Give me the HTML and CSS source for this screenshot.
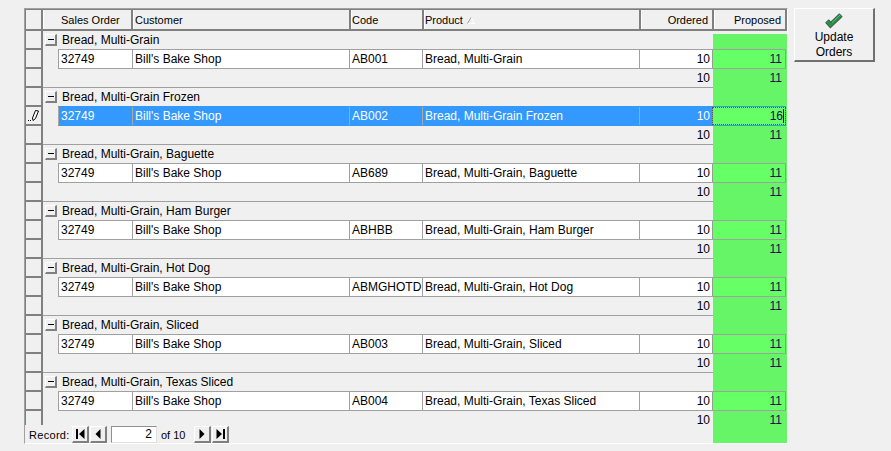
FILE: index.html
```html
<!DOCTYPE html>
<html lang="en">
<head>
<meta charset="utf-8">
<title>Update Orders</title>
<link rel="stylesheet" href="styles.css">
</head>
<body>
<div class="page">
  <div class="sheet">
    <div class="head">
      <div class="sel-head"></div>
      <div class="hc h-so">Sales Order</div>
      <div class="hc h-cu">Customer</div>
      <div class="hc h-co">Code</div>
      <div class="hc h-pr">Product <svg class="sort" width="8" height="7" viewBox="0 0 8 7"><path d="M4 .5 L7.500 6.500 H.5 Z" fill="none" stroke="#fff"/><path d="M4 .5 L.5 6.500" fill="none" stroke="#999"/></svg></div>
      <div class="hc h-or">Ordered</div>
      <div class="hc h-pp">Proposed</div>
    </div>
    <div class="body">
      <div class="group">
        <div class="sel-col"><i></i><i></i><i></i></div>
        <div class="rows">
          <div class="gh"><span class="tog"></span><span class="gt">Bread, Multi-Grain</span><span class="gf"></span></div>
          <div class="dr"><span class="d c-so">32749</span><span class="d c-cu">Bill's Bake Shop</span><span class="d c-co">AB001</span><span class="d c-pr">Bread, Multi-Grain</span><span class="d c-or">10</span><span class="d pv">11</span></div>
          <div class="ft"><span class="tot">10</span><span class="totg">11</span></div>
        </div>
      </div>
      <div class="group">
        <div class="sel-col"><i></i><i class="edit"><svg width="14" height="13" viewBox="0 0 14 13"><path d="M8.500 1.500 L11.500 2 L8.500 9.500 L6 11.500 L5.500 9 Z" fill="#fff" stroke="#000"/><path d="M1 11.500h1M3 11.500h1" stroke="#000"/></svg></i><i></i></div>
        <div class="rows">
          <div class="gh"><span class="tog"></span><span class="gt">Bread, Multi-Grain Frozen</span><span class="gf"></span></div>
          <div class="dr sel"><span class="d c-so">32749</span><span class="d c-cu">Bill's Bake Shop</span><span class="d c-co">AB002</span><span class="d c-pr">Bread, Multi-Grain Frozen</span><span class="d c-or">10</span><span class="d pv"><span class="cur">16</span></span></div>
          <div class="ft"><span class="tot">10</span><span class="totg">11</span></div>
        </div>
      </div>
      <div class="group">
        <div class="sel-col"><i></i><i></i><i></i></div>
        <div class="rows">
          <div class="gh"><span class="tog"></span><span class="gt">Bread, Multi-Grain, Baguette</span><span class="gf"></span></div>
          <div class="dr"><span class="d c-so">32749</span><span class="d c-cu">Bill's Bake Shop</span><span class="d c-co">AB689</span><span class="d c-pr">Bread, Multi-Grain, Baguette</span><span class="d c-or">10</span><span class="d pv">11</span></div>
          <div class="ft"><span class="tot">10</span><span class="totg">11</span></div>
        </div>
      </div>
      <div class="group">
        <div class="sel-col"><i></i><i></i><i></i></div>
        <div class="rows">
          <div class="gh"><span class="tog"></span><span class="gt">Bread, Multi-Grain, Ham Burger</span><span class="gf"></span></div>
          <div class="dr"><span class="d c-so">32749</span><span class="d c-cu">Bill's Bake Shop</span><span class="d c-co">ABHBB</span><span class="d c-pr">Bread, Multi-Grain, Ham Burger</span><span class="d c-or">10</span><span class="d pv">11</span></div>
          <div class="ft"><span class="tot">10</span><span class="totg">11</span></div>
        </div>
      </div>
      <div class="group">
        <div class="sel-col"><i></i><i></i><i></i></div>
        <div class="rows">
          <div class="gh"><span class="tog"></span><span class="gt">Bread, Multi-Grain, Hot Dog</span><span class="gf"></span></div>
          <div class="dr"><span class="d c-so">32749</span><span class="d c-cu">Bill's Bake Shop</span><span class="d c-co">ABMGHOTD</span><span class="d c-pr">Bread, Multi-Grain, Hot Dog</span><span class="d c-or">10</span><span class="d pv">11</span></div>
          <div class="ft"><span class="tot">10</span><span class="totg">11</span></div>
        </div>
      </div>
      <div class="group">
        <div class="sel-col"><i></i><i></i><i></i></div>
        <div class="rows">
          <div class="gh"><span class="tog"></span><span class="gt">Bread, Multi-Grain, Sliced</span><span class="gf"></span></div>
          <div class="dr"><span class="d c-so">32749</span><span class="d c-cu">Bill's Bake Shop</span><span class="d c-co">AB003</span><span class="d c-pr">Bread, Multi-Grain, Sliced</span><span class="d c-or">10</span><span class="d pv">11</span></div>
          <div class="ft"><span class="tot">10</span><span class="totg">11</span></div>
        </div>
      </div>
      <div class="group last">
        <div class="sel-col"><i></i><i></i><i></i></div>
        <div class="rows">
          <div class="gh"><span class="tog"></span><span class="gt">Bread, Multi-Grain, Texas Sliced</span><span class="gf"></span></div>
          <div class="dr"><span class="d c-so">32749</span><span class="d c-cu">Bill's Bake Shop</span><span class="d c-co">AB004</span><span class="d c-pr">Bread, Multi-Grain, Texas Sliced</span><span class="d c-or">10</span><span class="d pv">11</span></div>
          <div class="ft"><span class="tot">10</span><span class="totg">11</span></div>
        </div>
      </div>
      <div class="tail"></div>
    </div>
    <div class="nav">
      <span class="nav-label">Record:</span>
      <span class="nb"><svg width="11" height="10" viewBox="0 0 11 10"><path d="M1 0h2v10h-2zM9.500 0v10L4 5z"/></svg></span>
      <span class="nb"><svg width="6" height="10" viewBox="0 0 6 10"><path d="M5.500 0v10L.5 5z"/></svg></span>
      <span class="nav-input">2</span>
      <span class="nav-of">of 10</span>
      <span class="nb"><svg width="6" height="10" viewBox="0 0 6 10"><path d="M.5 0v10L5.500 5z"/></svg></span>
      <span class="nb"><svg width="11" height="10" viewBox="0 0 11 10"><path d="M1.500 0v10L7 5zM8 0h2v10h-2z"/></svg></span>
    </div>
  </div>
  <div class="btn">
    <svg class="check" width="20" height="17" viewBox="0 0 20 17"><path d="M3 9 L6.500 13 L17 3" fill="none" stroke="#5a4a6a" stroke-width="5"/><path d="M3 9 L6.500 13 L17 3" fill="none" stroke="#1e9a34" stroke-width="3"/><path d="M8 10.500 L16 3" fill="none" stroke="#58c868" stroke-width="1"/></svg>
    <span>Update</span>
    <span>Orders</span>
  </div>
</div>
</body>
</html>
```

FILE: styles.css
```css
html, body { margin: 0; padding: 0; background: #f0f0f0; }
body { font-family: "Liberation Sans", Arial, sans-serif; font-size: 12px; color: #000; width: 891px; height: 451px; overflow: hidden; }
.page { display: flex; align-items: flex-start; padding: 8px 0 0 24px; gap: 6px; }
.sheet { position: relative; width: 764px; height: 436px; flex: none; box-sizing: border-box; border-top: 1px solid #a0a0a0; border-left: 1px solid #a0a0a0; border-bottom: 1px solid #fff; border-right: 1px solid #fff; overflow: hidden; display: flex; flex-direction: column; }
.head { display: flex; height: 22px; flex: none; border-top: 1px solid #808080; border-bottom: 2px solid #808080; box-sizing: border-box; }
.sel-head { width: 15px; flex: none; border-left: 1px solid #808080; border-right: 2px solid #808080; }
.hc { box-sizing: border-box; font-size: 11px; line-height: 20px; border-right: 2px solid #808080; border-left: 1px solid #fff; white-space: nowrap; }
.h-so { width: 90px; padding-left: 17px; }
.h-cu { width: 218px; padding-left: 1px; }
.h-co { width: 73px; }
.h-pr { width: 217px; }
.h-or { width: 73px; text-align: right; padding-right: 4px; }
.h-pp { width: 73px; text-align: right; padding-right: 4px; }
.sort { margin-left: 1px; }
.body { flex: 1; min-height: 0; display: flex; flex-direction: column; }
.group { display: flex; flex: none; height: 57px; }
.sel-col { width: 15px; flex: none; display: flex; flex-direction: column; border-left: 1px solid #808080; border-right: 2px solid #808080; }
.sel-col i { display: flex; align-items: center; justify-content: center; flex: none; height: 19px; box-sizing: border-box; border-bottom: 2px solid #808080; }
.rows { flex: 1; min-width: 0; display: flex; flex-direction: column; }
.gh { display: flex; align-items: center; height: 19px; box-sizing: border-box; padding-bottom: 1px; }
.tog { width: 12px; height: 12px; margin-left: 2px; box-sizing: border-box; border-style: solid; border-width: 1px 2px 2px 1px; border-color: #fff #808080 #808080 #fff; display: flex; align-items: center; justify-content: center; flex: none; }
.tog::before { content: ""; width: 6px; height: 1px; background: #000; }
.gt { margin-left: 5px; width: 651px; flex: none; white-space: nowrap; }
.gf { width: 74px; height: 19px; flex: none; margin-bottom: -1px; background: #66f566; }
.group:first-child .gf { background: linear-gradient(#f0f0f0 0 3px, #66f566 3px); }
.dr { display: flex; margin-left: 15px; margin-right: 1px; height: 20px; margin-top: -1px; border-top: 1px solid #a0a0a0; border-bottom: 1px solid #a0a0a0; box-sizing: border-box; line-height: 18px; background: #fff; position: relative; }
.dr::after { content: ""; position: absolute; left: 100%; top: -1px; bottom: -1px; width: 1px; background: #66f566; }
.d { box-sizing: border-box; padding-left: 2px; border-left: 1px solid #a0a0a0; white-space: nowrap; overflow: hidden; }
.c-so { width: 74px; }
.c-cu { width: 217px; }
.c-co { width: 73px; }
.c-pr { width: 217px; }
.c-or { width: 73px; text-align: right; padding-right: 2px; }
.pv { width: 74px; text-align: right; background: #66ff66; border-width: 0 1px; border-style: solid; border-color: #8f9f8f; padding-right: 3px; color: #1a0a50; }
.sel { background: #3399ff; color: #fff; border-top: 1px dotted #c87830; border-bottom: 1px dotted #c87830; }
.sel .d:not(.pv) { border-left-color: #a8a8a8; }
.sel .d.pv { outline: 1px dotted #555; outline-offset: -1px; }
.cur { border-right: 1px solid #000; margin-right: -2px; }
.ft { display: flex; justify-content: flex-end; height: 19px; line-height: 19px; box-sizing: border-box; background: linear-gradient(#a0a0a0,#a0a0a0) 0 100% / 100% 1px no-repeat; }
.last .ft { background: none; }
.tot { padding-right: 3px; }
.totg { width: 74px; box-sizing: border-box; background: #66f566; text-align: right; padding-right: 5px; color: #1a0a50; }
.tail { flex: none; height: 13px; width: 74px; align-self: flex-end; background: #66f566; }
.nav { position: absolute; left: 0; bottom: 0; display: flex; align-items: center; height: 18px; width: 210px; background: #f0f0f0; box-sizing: border-box; padding: 1px 0 0 4px; white-space: nowrap; }
.nav-label { width: 38px; margin-right: 5px; flex: none; font-size: 11px; letter-spacing: .3px; }
.nb { width: 17px; height: 17px; flex: none; box-sizing: border-box; display: flex; align-items: center; justify-content: center; border-style: solid; border-width: 1px 2px 2px 1px; border-color: #fff #808080 #808080 #fff; }
.nb + .nb { margin-left: 1px; }
.nav-input { width: 46px; height: 17px; margin-left: 4px; flex: none; box-sizing: border-box; background: #fff; border: 1px solid; border-color: #909090 #e0e0e0 #e0e0e0 #909090; text-align: right; padding-right: 4px; line-height: 15px; }
.nav-of { width: 33px; margin-left: 4px; flex: none; font-size: 11px; }
.btn { width: 81px; height: 54px; flex: none; box-sizing: border-box; border-style: solid; border-width: 1px 2px 2px 1px; border-color: #fff #707070 #707070 #fff; display: flex; flex-direction: column; align-items: center; line-height: 15px; font-size: 12px; padding-top: 3px; }
.check { flex: none; margin-bottom: 1px; }
```
